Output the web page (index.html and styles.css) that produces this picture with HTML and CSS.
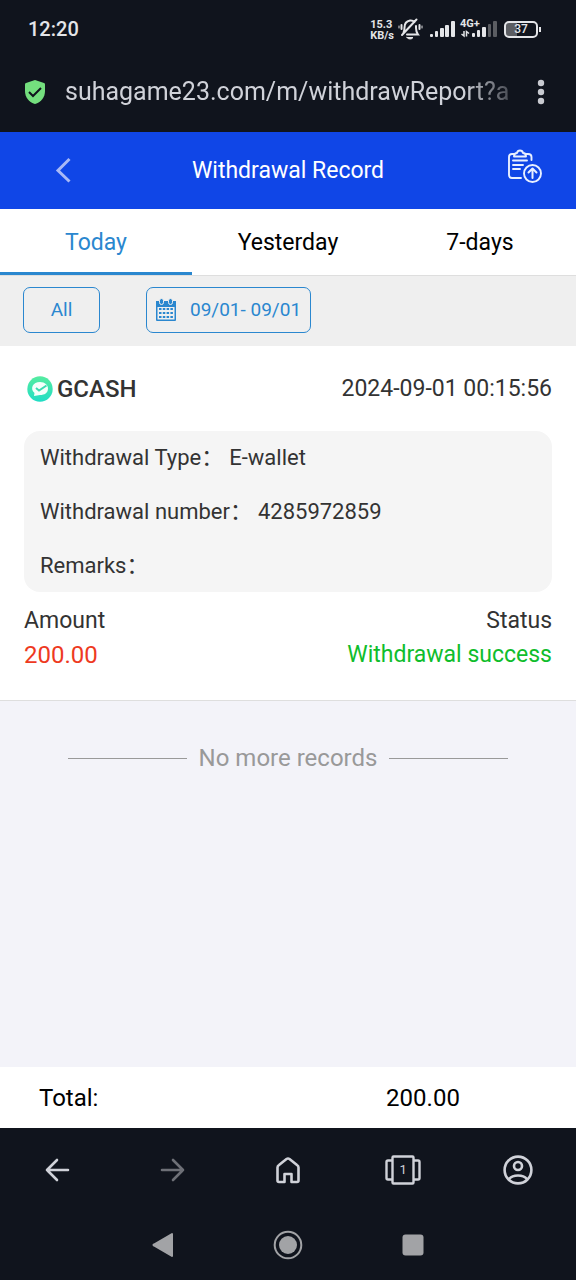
FILE: index.html
```
<!DOCTYPE html>
<html lang="en">
<head>
<meta charset="utf-8">
<meta name="viewport" content="width=device-width, initial-scale=1">
<title>Withdrawal Record</title>
<link rel="stylesheet" href="styles.css">
</head>
<body>
<div class="status-bar">
  <span class="clock">12:20</span>
  <div class="status-icons">
    <span class="net-speed"><span>15.3</span><span>KB/s</span></span>
    <svg class="icon-mute" width="26" height="24" viewBox="0 0 26 24" fill="none" stroke="#e4e5e8" stroke-width="2" stroke-linecap="round">
      <path d="M6.500 15.500C7.500 14 7.500 12.500 7.500 10.500C7.500 6.500 10 4 13 3.500C15 3.200 16 3.500 17.500 5M19 9V11C19 13.500 19.500 15.500 21 17.500H10M5 18L19.500 2.500M4.500 8V12M22.500 8V12"/>
      <path d="M10 20.500H16Q15 22 13 22T10 20.500Z" fill="#e4e5e8" stroke-width="1"/>
      <path d="M2 9V11M25 9V11" stroke-width="1"/>
    </svg>
    <svg class="icon-signal" width="27" height="18" viewBox="0 0 27 18" fill="#e4e5e8">
      <rect x="1" y="14" width="3" height="3" rx="1"/><rect x="6" y="11" width="3" height="6" rx="1"/><rect x="11" y="8" width="4" height="9" rx="1"/><rect x="16" y="5" width="4" height="12" rx="1"/><rect x="22" y="1" width="4" height="16" rx="1"/>
    </svg>
    <span class="mobile-data">
      <span class="generation">4G+</span>
      <svg width="37" height="18" viewBox="0 0 37 18" fill="#e4e5e8">
        <path d="M4 11V16L1.500 14M6.500 16.500V11.500L9 13.500" stroke="#e4e5e8" fill="none" stroke-width="1.500"/>
        <rect x="12" y="13" width="3" height="4" rx="1"/><rect x="17" y="10" width="3" height="7" rx="1"/><rect x="22" y="7" width="4" height="10" rx="1"/>
        <g fill="#5b5d62"><rect x="28" y="4" width="3" height="13" rx="1"/><rect x="33" y="1" width="4" height="16" rx="1"/></g>
      </svg>
    </span>
    <span class="battery"><span class="battery-body">37</span><span class="battery-tip"></span></span>
  </div>
</div>

<div class="address-bar">
  <svg class="shield" width="22" height="26" viewBox="0 0 22 26"><path d="M11 1L20 4C20.700 4.300 21 4.600 21 5.500V12C21 18.500 17 22.500 12.500 24.600Q11 25.200 9.500 24.600C5 22.500 1 18.500 1 12V5.500C1 4.600 1.300 4.300 2 4Z" fill="#74df7e"/><path d="M5 13L9 17L17 9" fill="none" stroke="#10141d" stroke-width="2"/></svg>
  <input class="url" type="text" aria-label="Address" value="suhagame23.com/m/withdrawReport?a" readonly>
  <button class="icon-button menu" aria-label="Menu"><svg width="8" height="26" viewBox="0 0 8 26" fill="#c8cad0"><circle cx="4" cy="4" r="3.200"/><circle cx="4" cy="13" r="3.200"/><circle cx="4" cy="22" r="3.200"/></svg></button>
</div>

<header class="page-header">
  <button class="icon-button back" aria-label="Back"><svg width="18" height="28" viewBox="0 0 18 28" fill="none" stroke="#a9b9f6" stroke-width="3"><path d="M15.500 2L4 13.500L15.500 24.500"/></svg></button>
  <h1 class="page-title">Withdrawal Record</h1>
  <button class="icon-button submit-record" aria-label="Submit record"><svg width="36" height="36" viewBox="0 0 36 36" fill="none" stroke="#e8efff" stroke-width="1.900" stroke-linecap="round" stroke-linejoin="round">
    <path d="M7 5H5Q2 5 2 8V26Q2 29 5 29H14M19 5H21Q24.500 5 24.500 8V11"/><path d="M7 7.500Q7 4 10 4Q10.500 1.500 13 1.500T16 4Q19 4 19 7.500Z"/><path d="M6 11.500H20M6 16H16M6 20H13"/><circle cx="25.500" cy="24.500" r="8.500"/><path d="M25.500 29V20M21.500 23.500L25.500 19.500L29.500 23.500" stroke-width="2"/></svg></button>
</header>

<nav class="tabs">
  <button class="tab active">Today</button>
  <button class="tab">Yesterday</button>
  <button class="tab">7-days</button>
</nav>

<div class="filters">
  <button class="filter all">All</button>
  <button class="filter dates">
    <svg width="22" height="24" viewBox="0 0 22 24">
      <path d="M1 3H21V22Q21 23 20 23H2Q1 23 1 22Z" fill="#2a87cf"/>
      <rect x="2.500" y="9" width="17" height="12.500" fill="#efefef"/>
      <path d="M4 11H18M4 15H18M4 19H18" stroke="#2a87cf" stroke-width="2" stroke-dasharray="2.500 1.300"/>
      <g fill="#2a87cf" stroke="#efefef"><rect x="4.500" y="0.500" width="4" height="6" rx="2"/><rect x="13.500" y="0.500" width="4" height="6" rx="2"/></g>
    </svg>
    <span>09/01- 09/01</span>
  </button>
</div>

<main class="records">
  <article class="record">
    <div class="record-head">
      <h2 class="wallet"><svg width="26" height="26" viewBox="0 0 26 26"><defs><linearGradient id="mint" x1="0" y1="0" x2="0" y2="1"><stop offset="0" stop-color="#56eca0"/><stop offset="1" stop-color="#20ddc5"/></linearGradient></defs><circle cx="13" cy="13" r="12.700" fill="url(#mint)"/><path d="M13 6C18 6 21 9 21 12.500C21 17 17.500 19 13 19L7 20L7.500 17C2.500 12.500 6 6 13 6Z" fill="#f4fffb"/><path d="M9 12L12 14.500L19.500 9.500" fill="none" stroke="#3cdbb1" stroke-width="2"/></svg>GCASH</h2>
      <time class="time">2024-09-01 00:15:56</time>
    </div>
    <dl class="details">
      <div class="detail"><dt>Withdrawal Type&#xFF1A;</dt><dd>E-wallet</dd></div>
      <div class="detail"><dt>Withdrawal number&#xFF1A;</dt><dd>4285972859</dd></div>
      <div class="detail"><dt>Remarks&#xFF1A;</dt><dd></dd></div>
    </dl>
    <div class="result">
      <div class="result-col"><span>Amount</span><span class="amount">200.00</span></div>
      <div class="result-col end"><span>Status</span><span class="success">Withdrawal success</span></div>
    </div>
  </article>
  <p class="no-more">No more records</p>
</main>

<footer class="total"><span class="total-label">Total:</span><span class="total-value">200.00</span></footer>

<nav class="browser-nav">
  <button class="icon-button" aria-label="Back"><svg width="32" height="32" viewBox="0 0 32 32" fill="none" stroke="#d0d2d9" stroke-width="2.600" stroke-linecap="round" stroke-linejoin="round"><path d="M26 16H5M15 6L5 16L15 26"/></svg></button>
  <button class="icon-button" aria-label="Forward"><svg width="32" height="32" viewBox="0 0 32 32" fill="none" stroke="#6e7077" stroke-width="2.600" stroke-linecap="round" stroke-linejoin="round"><path d="M5 16H26M16 6L26 16L16 26"/></svg></button>
  <button class="icon-button" aria-label="Home"><svg width="32" height="32" viewBox="0 0 32 32" fill="none" stroke="#d0d2d9" stroke-width="2.600" stroke-linejoin="round"><path d="M5.500 26.500V13.500Q5.500 12 7 11L14.500 5Q16 4 17.500 5L25 11Q26.500 12 26.500 13.500V26.500Q26.500 28 25 28H19.500V20H12.500V28H7Q5.500 28 5.500 26.500Z"/></svg></button>
  <button class="icon-button tab-count" aria-label="Open tabs, 1"><svg width="38" height="32" viewBox="0 0 38 32" fill="none" stroke="#d0d2d9" stroke-width="2.400" stroke-linejoin="round"><rect x="8.500" y="2.500" width="21" height="27" rx="1"/><path d="M8 6.500H4Q2.500 6.500 2.500 8V24Q2.500 25.500 4 25.500H8M30 6.500H34Q35.500 6.500 35.500 8V24Q35.500 25.500 34 25.500H30"/></svg><span class="count">1</span></button>
  <button class="icon-button" aria-label="Profile"><svg width="32" height="32" viewBox="0 0 32 32" fill="none" stroke="#d0d2d9" stroke-width="2.600"><circle cx="16" cy="16" r="13.400"/><circle cx="16" cy="12" r="4"/><path d="M7 25Q10 21.500 16 21.500T25 25"/></svg></button>
</nav>

<nav class="system-nav">
  <button class="icon-button" aria-label="System back"><svg width="30" height="30" viewBox="0 0 30 30"><path d="M24 4V26L6 15.500Q5 15 6 14.500Z" fill="#a2a3a6" stroke="#a2a3a6" stroke-width="2" stroke-linejoin="round"/></svg></button>
  <button class="icon-button" aria-label="System home"><svg width="30" height="30" viewBox="0 0 30 30"><circle cx="15" cy="15" r="13.300" fill="none" stroke="#a2a3a6" stroke-width="2"/><circle cx="15" cy="15" r="9" fill="#a2a3a6"/></svg></button>
  <button class="icon-button" aria-label="Recent apps"><svg width="30" height="30" viewBox="0 0 30 30"><rect x="4.500" y="4.500" width="21" height="21" rx="3" fill="#a2a3a6"/></svg></button>
</nav>
</body>
</html>
```
FILE: styles.css
```
* { box-sizing: border-box; }

body {
  margin: 0;
  min-height: 100vh;
  display: flex;
  flex-direction: column;
  background: #f3f3f9;
  color: #333;
  font-family: Roboto, "Noto Sans CJK SC", sans-serif;
  font-size: 22px;
  line-height: 28px;
}

button, input {
  margin: 0;
  padding: 0;
  border: 0;
  background: none;
  color: inherit;
  font: inherit;
}

h1, h2, p, dl, dd { margin: 0; }
svg { display: block; flex: none; }
.icon-button { display: grid; place-items: center; }

.status-bar {
  display: flex;
  align-items: center;
  justify-content: space-between;
  height: 58px;
  padding: 0 35px 0 28px;
  background: #10141d;
  color: #e4e5e8;
}
.clock { font-size: 20px; font-weight: 500; }
.status-icons { display: flex; align-items: center; }
.net-speed {
  display: grid;
  padding-top: 2px;
  font-size: 11px;
  font-weight: 700;
  line-height: 11px;
}
.icon-mute { margin-left: 3px; }
.icon-signal { margin-left: 6px; }
.mobile-data { position: relative; margin-left: 4px; }
.generation {
  position: absolute;
  top: -1px;
  left: 0;
  font-size: 11px;
  font-weight: 700;
  line-height: 10px;
}
.battery { display: flex; align-items: center; margin-left: 7px; }
.battery-body {
  width: 34px;
  height: 17px;
  border: 2px solid #e4e5e8;
  border-radius: 5px;
  background: linear-gradient(90deg, #5b5d62 37%, transparent 37%);
  font-size: 12px;
  font-weight: 500;
  line-height: 13px;
  text-align: center;
}
.battery-tip { width: 2px; height: 5px; margin-left: 1px; background: #e4e5e8; }

.address-bar {
  display: flex;
  align-items: center;
  height: 74px;
  padding: 0 31px 7px 24px;
  background: #10141d;
  color: #d0d2d9;
}
.url {
  flex: 1;
  min-width: 0;
  height: 36px;
  margin: 0 28px 0 19px;
  outline: 0;
  font-size: 25px;
  -webkit-mask-image: linear-gradient(90deg, #000 90%, rgba(0, 0, 0, 0.3));
  mask-image: linear-gradient(90deg, #000 90%, rgba(0, 0, 0, 0.3));
}

.page-header {
  display: grid;
  grid-template-columns: 126px 1fr 126px;
  align-items: center;
  height: 77px;
  background: #1046e7;
  color: #fff;
}
.back, .submit-record { height: 77px; }
.submit-record { justify-content: end; padding: 0 33px 8px 0; }
.page-title { font-size: 23px; font-weight: 400; text-align: center; }

.tabs {
  display: grid;
  grid-template-columns: repeat(3, 1fr);
  height: 67px;
  border-bottom: 1px solid #dedede;
  background: #fff;
  color: #000;
}
.tab { padding-top: 4px; border-bottom: 3px solid transparent; font-size: 23px; }
.active { border-color: #2a87cf; color: #2a87cf; }

.filters {
  display: flex;
  align-items: center;
  gap: 46px;
  height: 70px;
  padding: 0 23px 2px;
  background: #efefef;
}
.filter {
  height: 46px;
  border: 1px solid #2a87cf;
  border-radius: 7px;
  color: #2a87cf;
  font-size: 19px;
}
.all { width: 77px; }
.dates { display: flex; align-items: center; gap: 13px; padding: 0 9px 0 8px; }

.records { flex: 1; }
.record {
  padding: 28px 24px;
  border-bottom: 1px solid #dedede;
  background: #fff;
}
.record-head { display: flex; align-items: center; justify-content: space-between; height: 30px; }
.wallet {
  display: flex;
  align-items: center;
  gap: 4px;
  padding-left: 3px;
  font-size: 24px;
  font-weight: 500;
}
.time { font-size: 23px; }
.details {
  display: grid;
  gap: 26px;
  margin-top: 27px;
  padding: 13px 16px 12px;
  border-radius: 16px;
  background: #f5f5f5;
}
.detail { display: flex; gap: 6px; height: 28px; }
.result {
  display: flex;
  justify-content: space-between;
  margin-top: 12px;
}
.result-col { display: flex; flex-direction: column; line-height: 34px; font-size: 23px; }
.end { text-align: right; }
.amount { color: #ee3a1f; font-size: 24px; }
.success { color: #0fbd2c; }
.no-more {
  display: flex;
  align-items: center;
  gap: 12px;
  padding: 43px 68px;
  color: #999;
  font-size: 24px;
}
.no-more::before, .no-more::after { content: ""; flex: 1; height: 1px; background: #999; }

.total {
  display: grid;
  grid-template-columns: 1fr 306px;
  align-items: center;
  height: 61px;
  background: #fff;
  color: #000;
  font-size: 24px;
}
.total-label { padding-left: 39px; }
.total-value { text-align: center; }

.browser-nav {
  display: grid;
  grid-template-columns: repeat(5, 1fr);
  height: 82px;
  padding-top: 1px;
  background: #10141d;
  color: #d0d2d9;
}
.tab-count > * { grid-area: 1 / 1; }
.count { font-size: 13px; line-height: 16px; }

.system-nav {
  display: flex;
  align-items: center;
  justify-content: center;
  gap: 95px;
  height: 70px;
  background: #10141d;
}
```
